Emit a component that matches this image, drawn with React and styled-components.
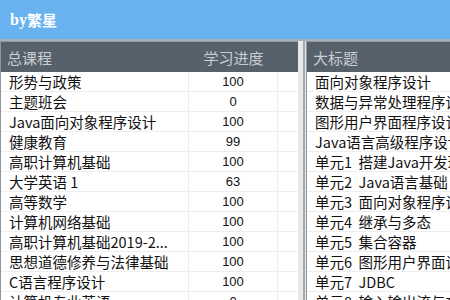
import React from 'react';
import styled, { createGlobalStyle } from 'styled-components';

const GlobalStyle = createGlobalStyle`
  html, body {
    margin: 0;
    padding: 0;
    background: #ffffff;
  }
  * {
    box-sizing: border-box;
  }
`;

const Screen = styled.div`
  width: 450px;
  height: 300px;
  overflow: hidden;
  display: flex;
  flex-direction: column;
  font-family: 'Noto Sans CJK SC', 'Noto Sans', sans-serif;
`;

const TitleBar = styled.div`
  height: 39px;
  flex-shrink: 0;
  background: #68b2ef;
  display: flex;
  align-items: center;
  padding-left: 10px;
  color: #ffffff;
  font-weight: 700;
  font-size: 15px;
`;

const TitleLatin = styled.span`
  font-family: 'Liberation Serif', serif;
  font-size: 16px;
`;

const Body = styled.div`
  flex: 1;
  display: flex;
  background: #dfe3e7;
  border-top: 2px solid #a9b0b6;
  min-height: 0;
`;

const Panel = styled.div`
  width: ${(p) => p.width};
  flex-shrink: 0;
  background: #ffffff;
  border-left: 1px solid #8e979f;
  border-top: 1px solid #8e979f;
  display: flex;
  flex-direction: column;
  overflow: hidden;
`;

const Splitter = styled.div`
  width: 8px;
  flex-shrink: 0;
  background: #e6e9ec;
  display: flex;
  justify-content: flex-end;
`;

const SplitLine = styled.div`
  width: 2px;
  margin-right: 1px;
  background: #a3a9ae;
`;

const HeaderRow = styled.div`
  height: 30px;
  flex-shrink: 0;
  display: grid;
  grid-template-columns: ${(p) => p.cols};
  background: #56616b;
  color: #c9ced3;
  font-size: 15px;
  align-items: center;
`;

const HeaderCell = styled.div`
  padding-left: ${(p) => (p.center ? '0' : '6px')};
  text-align: ${(p) => (p.center ? 'center' : 'left')};
  white-space: nowrap;
`;

const Row = styled.div`
  height: 20px;
  flex-shrink: 0;
  display: grid;
  grid-template-columns: ${(p) => p.cols};
  border-bottom: 1px solid #eeeeee;
  color: #111111;
  font-size: 14.5px;
  line-height: 19px;
`;

const Cell = styled.div`
  padding-left: ${(p) => (p.center ? '0' : '8px')};
  text-align: ${(p) => (p.center ? 'center' : 'left')};
  font-size: ${(p) => (p.num ? '13px' : 'inherit')};
  font-family: ${(p) => (p.num ? "'Liberation Sans', sans-serif" : 'inherit')};
  border-right: ${(p) => (p.line ? '1px solid #ececec' : 'none')};
  white-space: pre;
  overflow: hidden;
`;

const courses = [
  ['形势与政策', '100'],
  ['主题班会', '0'],
  ['Java面向对象程序设计', '100'],
  ['健康教育', '99'],
  ['高职计算机基础', '100'],
  ['大学英语 1', '63'],
  ['高等数学', '100'],
  ['计算机网络基础', '100'],
  ['高职计算机基础2019-2...', '100'],
  ['思想道德修养与法律基础', '100'],
  ['C语言程序设计', '100'],
  ['计算机专业英语', '0'],
];

const titles = [
  '面向对象程序设计',
  '数据与异常处理程序设计',
  '图形用户界面程序设计',
  'Java语言高级程序设计',
  '单元1  搭建Java开发环境',
  '单元2  Java语言基础',
  '单元3  面向对象程序设计',
  '单元4  继承与多态',
  '单元5  集合容器',
  '单元6  图形用户界面设计',
  '单元7  JDBC',
  '单元8  输入输出流与文件',
];

const leftCols = '188px 89px 1fr';

export default function App() {
  return (
    <>
      <GlobalStyle />
      <Screen>
        <TitleBar>
          <TitleLatin>by</TitleLatin>繁星
        </TitleBar>
        <Body>
          <Panel width="298px">
            <HeaderRow cols={leftCols}>
              <HeaderCell>总课程</HeaderCell>
              <HeaderCell center>学习进度</HeaderCell>
              <HeaderCell />
            </HeaderRow>
            {courses.map(([name, progress]) => (
              <Row cols={leftCols} key={name}>
                <Cell line>{name}</Cell>
                <Cell center num line>
                  {progress}
                </Cell>
                <Cell />
              </Row>
            ))}
          </Panel>
          <Splitter>
            <SplitLine />
          </Splitter>
          <Panel width="200px">
            <HeaderRow cols="1fr">
              <HeaderCell>大标题</HeaderCell>
            </HeaderRow>
            {titles.map((t) => (
              <Row cols="1fr" key={t}>
                <Cell>{t}</Cell>
              </Row>
            ))}
          </Panel>
        </Body>
      </Screen>
    </>
  );
}
